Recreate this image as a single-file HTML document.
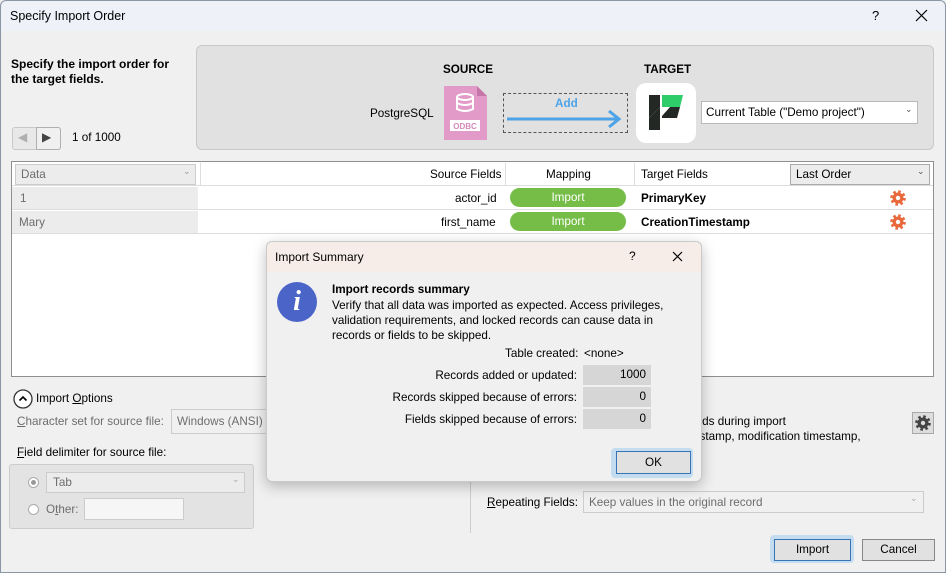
<!DOCTYPE html>
<html><head><style>
*{box-sizing:border-box;margin:0;padding:0}
body{width:946px;height:573px;overflow:hidden;font-family:"Liberation Sans",sans-serif;font-size:11.7px;color:#000;background:#f0f0f0;position:relative}
.a{position:absolute;white-space:nowrap}
.b{font-weight:bold}
.g{color:#6d6d6d}
</style></head><body>
<div class="a" style="left:0;top:0;width:946px;height:573px;border:1px solid #8a96a6;border-radius:6px 6px 0 0"></div>
<div class="a" style="left:1px;top:1px;width:944px;height:30px;background:#eef1f8;border-radius:6px 6px 0 0"></div>
<div class="a" style="left:10px;top:9px;font-size:12.5px">Specify Import Order</div>
<div class="a" style="left:872px;top:8px;font-size:13px">?</div>
<svg class="a" style="left:915px;top:9px" width="13" height="13"><path d="M1 1L12 12M12 1L1 12" stroke="#000" stroke-width="1.2"/></svg>

<div class="a b" style="left:11px;top:57px;line-height:15px;font-size:12px">Specify the import order for<br>the target fields.</div>
<div class="a" style="left:12px;top:127px;width:49px;height:23px;border:1px solid #c8c8c8;border-radius:3px;background:#e8e8e8"></div>
<div class="a" style="left:36px;top:127px;width:25px;height:23px;border:1px solid #b0b0b0;border-radius:0 3px 3px 0;background:#f0f0f0"></div>
<div class="a" style="left:18px;top:130px;color:#b0b0b0;font-size:12px">◀</div>
<div class="a" style="left:42px;top:130px;color:#444;font-size:12px">▶</div>
<div class="a" style="left:72px;top:131px">1 of 1000</div>

<div class="a" style="left:196px;top:45px;width:738px;height:105px;background:#e1e1e1;border:1px solid #c8c8c8;border-radius:6px"></div>
<div class="a b" style="left:443px;top:63px">SOURCE</div>
<div class="a b" style="left:644px;top:63px">TARGET</div>
<div class="a" style="left:370px;top:107px">PostgreSQL</div>
<svg class="a" style="left:444px;top:86px" width="43" height="54"><path d="M0 0H33L43 10V54H0Z" fill="#e29bc8"/><path d="M33 0L43 10H33Z" fill="#c676a8"/><ellipse cx="21" cy="11" rx="8" ry="3" fill="none" stroke="#fff" stroke-width="2"/><path d="M13 11V23Q21 27 29 23V11M13 17Q21 21 29 17" fill="none" stroke="#fff" stroke-width="2"/><rect x="6" y="34" width="30" height="11" fill="#fff"/><text x="21" y="43" font-size="8" font-weight="bold" fill="#d48ab8" text-anchor="middle" font-family="Liberation Sans">ODBC</text></svg>
<div class="a" style="left:503px;top:93px;width:125px;height:40px;border:1px dashed #555"></div>
<div class="a b" style="left:555px;top:97px;color:#4da3e8">Add</div>
<svg class="a" style="left:505px;top:106px" width="120" height="24"><path d="M2 13H114M104 5L114 13L104 21" stroke="#4da3e8" stroke-width="3" fill="none"/></svg>
<div class="a" style="left:636px;top:83px;width:60px;height:60px;background:#fff;border-radius:10px"></div>
<svg class="a" style="left:649px;top:94px" width="36" height="38"><path d="M0 1H11V13L0 24Z" fill="#232825"/><path d="M11 1H14V13H11Z" fill="#fff"/><path d="M13 1H34L31 13H13Z" fill="#2fcc6a"/><path d="M0 24L11 13V12H11V36H0Z" fill="#232825"/><path d="M13 13H31L28 24H13Z" fill="#232825"/><path d="M13 13L21 13L13 22Z" fill="#fff"/></svg>
<div class="a" style="left:701px;top:101px;width:217px;height:23px;background:#fff;border:1px solid #b9b9b9"></div>
<div class="a" style="left:706px;top:106px">Current Table ("Demo project")</div>
<div class="a" style="left:905px;top:104px;font-size:9px;color:#555">⌄</div>

<div class="a" style="left:11px;top:161px;width:923px;height:216px;background:#fff;border:1px solid #8f8f8f"></div>
<div class="a" style="left:12px;top:162px;width:921px;height:24px;background:#fff;border-bottom:1px solid #ddd"></div>
<div class="a" style="left:15px;top:164px;width:181px;height:21px;background:#ececec;border:1px solid #ccc"></div>
<div class="a g" style="left:21px;top:168px">Data</div>
<div class="a" style="left:183px;top:166px;font-size:9px;color:#999">⌄</div>
<div class="a" style="left:200px;top:163px;width:1px;height:22px;background:#ddd"></div>
<div class="a" style="left:505px;top:163px;width:1px;height:22px;background:#ddd"></div>
<div class="a" style="left:634px;top:163px;width:1px;height:22px;background:#ddd"></div>
<div class="a" style="left:430px;top:168px">Source Fields</div>
<div class="a" style="left:546px;top:168px">Mapping</div>
<div class="a" style="left:641px;top:168px">Target Fields</div>
<div class="a" style="left:790px;top:164px;width:140px;height:21px;background:#ececec;border:1px solid #aaa"></div>
<div class="a" style="left:796px;top:168px">Last Order</div>
<div class="a" style="left:917px;top:166px;font-size:9px;color:#555">⌄</div>
<div class="a" style="left:12px;top:187px;width:186px;height:22px;background:#ececec"></div>
<div class="a" style="left:12px;top:211px;width:186px;height:22px;background:#ececec"></div>
<div class="a" style="left:12px;top:209px;width:921px;height:1px;background:#ddd"></div>
<div class="a" style="left:12px;top:233px;width:921px;height:1px;background:#ddd"></div>
<div class="a g" style="left:20px;top:192px">1</div>
<div class="a g" style="left:19px;top:216px">Mary</div>
<div class="a" style="left:455px;top:192px">actor_id</div>
<div class="a" style="left:441px;top:216px">first_name</div>
<div class="a" style="left:510px;top:188px;width:116px;height:19px;background:#76bd48;border-radius:10px;color:#fff;text-align:center;line-height:19px">Import</div>
<div class="a" style="left:510px;top:212px;width:116px;height:19px;background:#76bd48;border-radius:10px;color:#fff;text-align:center;line-height:19px">Import</div>
<div class="a b" style="left:641px;top:192px">PrimaryKey</div>
<div class="a b" style="left:641px;top:216px">CreationTimestamp</div>
<svg class="a" style="left:890px;top:190px" width="16" height="16"><circle cx="8" cy="8" r="5.5" fill="#e8683a"/><circle cx="8" cy="8" r="6.3" fill="none" stroke="#e8683a" stroke-width="3" stroke-dasharray="2.5 2.45"/><circle cx="8" cy="8" r="2.2" fill="#fff"/></svg>
<svg class="a" style="left:890px;top:214px" width="16" height="16"><circle cx="8" cy="8" r="5.5" fill="#e8683a"/><circle cx="8" cy="8" r="6.3" fill="none" stroke="#e8683a" stroke-width="3" stroke-dasharray="2.5 2.45"/><circle cx="8" cy="8" r="2.2" fill="#fff"/></svg>

<svg class="a" style="left:13px;top:389px" width="20" height="20"><circle cx="10" cy="10" r="9" fill="#fff" stroke="#333" stroke-width="1.3"/><path d="M6.5 11.5L10 8L13.5 11.5" fill="none" stroke="#000" stroke-width="1.6"/></svg>
<div class="a" style="left:36px;top:392px">Import <u>O</u>ptions</div>
<div class="a g" style="left:17px;top:415px"><u>C</u>haracter set for source file:</div>
<div class="a" style="left:171px;top:409px;width:100px;height:25px;background:#f0f0f0;border:1px solid #ccc"></div>
<div class="a g" style="left:177px;top:415px">Windows (ANSI)</div>
<div class="a" style="left:17px;top:446px"><u>F</u>ield delimiter for source file:</div>
<div class="a" style="left:9px;top:464px;width:245px;height:65px;background:#e3e3e3;border:1px solid #ccc;border-radius:3px"></div>
<div class="a" style="left:28px;top:477px;width:11px;height:11px;border:1px solid #aaa;border-radius:50%;background:#fff"></div>
<div class="a" style="left:31px;top:480px;width:5px;height:5px;border-radius:50%;background:#999"></div>
<div class="a" style="left:46px;top:472px;width:199px;height:21px;background:#ececec;border:1px solid #ccc"></div>
<div class="a g" style="left:53px;top:476px">Tab</div>
<div class="a" style="left:232px;top:474px;font-size:9px;color:#aaa">⌄</div>
<div class="a" style="left:28px;top:504px;width:11px;height:11px;border:1px solid #aaa;border-radius:50%;background:#fff"></div>
<div class="a g" style="left:46px;top:503px">O<u>t</u>her:</div>
<div class="a" style="left:84px;top:498px;width:100px;height:22px;background:#f6f6f6;border:1px solid #ccc"></div>
<div class="a" style="left:470px;top:395px;width:1px;height:138px;background:#ccc"></div>
<div class="a" style="left:693px;top:415px">elds during import</div>
<div class="a" style="left:693px;top:430px">estamp, modification timestamp,</div>
<div class="a" style="left:912px;top:412px;width:22px;height:22px;background:#ddd;border:1px solid #aaa"></div>
<svg class="a" style="left:915px;top:415px" width="16" height="16"><circle cx="8" cy="8" r="5.5" fill="#444"/><circle cx="8" cy="8" r="6.3" fill="none" stroke="#444" stroke-width="3" stroke-dasharray="2.5 2.45"/><circle cx="8" cy="8" r="2.2" fill="#ddd"/></svg>
<div class="a" style="left:487px;top:496px"><u>R</u>epeating Fields:</div>
<div class="a" style="left:583px;top:491px;width:341px;height:22px;background:#f0f0f0;border:1px solid #ccc"></div>
<div class="a g" style="left:589px;top:496px">Keep values in the original record</div>
<div class="a" style="left:910px;top:493px;font-size:9px;color:#aaa">⌄</div>
<div class="a" style="left:770px;top:535px;width:84px;height:28px;background:#c4dcf0;border-radius:4px"></div>
<div class="a" style="left:774px;top:539px;width:77px;height:22px;background:#e1e1e1;border:1px solid #3a74b8;text-align:center;line-height:20px">Import</div>
<div class="a" style="left:862px;top:539px;width:73px;height:22px;background:#e1e1e1;border:1px solid #888;text-align:center;line-height:20px">Cancel</div>

<div class="a" style="left:266px;top:241px;width:436px;height:241px;background:#f0f0f0;border:1px solid #c9c9c9;border-radius:6px;box-shadow:0 4px 14px rgba(0,0,0,.25)"></div>
<div class="a" style="left:267px;top:242px;width:434px;height:30px;background:#f7ede8;border-radius:6px 6px 0 0"></div>
<div class="a" style="left:275px;top:250px;font-size:12px">Import Summary</div>
<div class="a" style="left:629px;top:249px;font-size:12px">?</div>
<svg class="a" style="left:672px;top:251px" width="11" height="11"><path d="M1 1L10 10M10 1L1 10" stroke="#000" stroke-width="1.2"/></svg>
<div class="a" style="left:277px;top:282px;width:40px;height:40px;border-radius:50%;background:#4b64c8;color:#fff;text-align:center;font:bold italic 28px 'Liberation Serif',serif;line-height:40px">i</div>
<div class="a b" style="left:332px;top:283px">Import records summary</div>
<div class="a" style="left:332px;top:298px;line-height:15px">Verify that all data was imported as expected. Access privileges,<br>validation requirements, and locked records can cause data in<br>records or fields to be skipped.</div>
<div class="a" style="left:505px;top:347px">Table created:</div>
<div class="a" style="left:584px;top:347px">&lt;none&gt;</div>
<div class="a" style="right:369px;top:369px">Records added or updated:</div>
<div class="a" style="right:369px;top:391px">Records skipped because of errors:</div>
<div class="a" style="right:369px;top:413px">Fields skipped because of errors:</div>
<div class="a" style="left:583px;top:365px;width:68px;height:20px;background:#d6d6d6;text-align:right;padding-right:5px;line-height:20px">1000</div>
<div class="a" style="left:583px;top:387px;width:68px;height:20px;background:#d6d6d6;text-align:right;padding-right:5px;line-height:20px">0</div>
<div class="a" style="left:583px;top:409px;width:68px;height:20px;background:#d6d6d6;text-align:right;padding-right:5px;line-height:20px">0</div>
<div class="a" style="left:611px;top:448px;width:82px;height:30px;background:#c4dcf0;border-radius:4px"></div>
<div class="a" style="left:616px;top:451px;width:75px;height:23px;background:#e1e1e1;border:1px solid #3a74b8;text-align:center;line-height:21px">OK</div>
</body></html>
